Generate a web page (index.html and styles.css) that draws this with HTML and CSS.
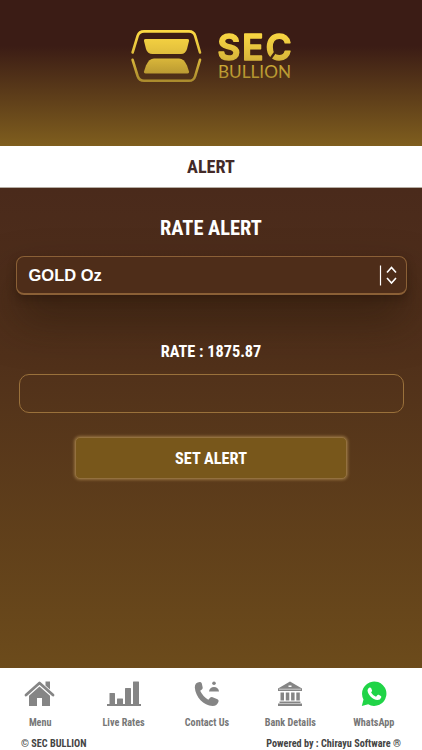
FILE: index.html
```html
<!DOCTYPE html>
<html lang="en">
  <head>
    <meta charset="UTF-8" />
    <meta name="viewport" content="width=device-width, initial-scale=1.0" />
    <title>SEC Bullion - Alert</title>
    <link rel="stylesheet" href="styles.css">
  </head>
  <body>
    <header class="header">
      <svg class="logo" width="162" height="54" viewBox="130 29 162 54">
        <defs>
          <linearGradient id="gold" gradientUnits="userSpaceOnUse" x1="0" y1="32" x2="0" y2="82">
            <stop offset="0" stop-color="#fbd843" />
            <stop offset="0.5" stop-color="#dcb93b" />
            <stop offset="1" stop-color="#a98a2d" />
          </linearGradient>
          <mask id="slit" maskUnits="userSpaceOnUse" x="210" y="25" width="90" height="60">
            <rect x="210" y="25" width="90" height="60" fill="#fff" />
            <path d="M268.500 61.500 L276 51" stroke="#000" stroke-width="2.200" />
          </mask>
        </defs>
        <g fill="none" stroke="url(#gold)" stroke-width="2.6" stroke-linecap="round">
          <path d="M132.6 52.5 L137.6 36 Q139.2 31.4 144 31.4 H189 Q193.8 31.4 195.2 36 L200 52.5" />
          <path d="M132.6 59.8 L137.6 76 Q139.2 80.8 144 80.8 H189 Q193.8 80.8 195.2 76 L200 59.8" />
        </g>
        <g fill="url(#gold)">
          <path d="M145.5 39 H187.5 Q189.5 39 189 41 L187 49 Q185.500 54 181 54 H152.500 Q147.500 54 146 49 L144 41 Q143.500 39 145.500 39Z" />
          <path d="M145.500 73.500 H187.500 Q189.500 73.500 189 71.500 L187 65.500 Q184 58.500 179 58.500 H154 Q149 58.500 146 65.500 L144 71.500 Q143.500 73.500 145.500 73.500Z" />
        </g>
        <g fill="url(#gold)" mask="url(#slit)">
          <text class="logo-sec" x="217.500 242.300 265.800" y="59.500">SEC</text>
        </g>
        <text class="logo-bullion" x="218" y="77.800" fill="url(#gold)" textLength="73" lengthAdjust="spacingAndGlyphs">BULLION</text>
      </svg>
    </header>

    <div class="page-title">ALERT</div>

    <main class="content">
      <h2 class="heading">RATE ALERT</h2>
      <div class="select">
        <span>GOLD Oz</span>
        <svg width="20" height="22" viewBox="0 0 20 22" fill="none" stroke="#fff">
          <path d="M1.500 1.500 V21.500" stroke-width="1.200" />
          <path d="M8 8.500 L12.500 3.500 L17 8.500 M8 14 L12.500 19 L17 14" stroke-width="1.600" />
        </svg>
      </div>
      <div class="rate">RATE : 1875.87</div>
      <input class="rate-input" type="text" aria-label="Rate" />
      <button class="set-button">SET ALERT</button>
    </main>

    <footer class="footer">
      <nav class="nav">
        <a class="nav-item">
          <svg width="32" height="28" viewBox="0 0 32 28" fill="#858585">
            <path d="M21.500 1.500 h4.500 v8 l-4.500 -4z" />
            <path d="M2 15 L15.500 3 L29 15" fill="none" stroke="#858585" stroke-width="2.800" stroke-linecap="round" stroke-linejoin="round" />
            <path d="M5 15.800 L15.500 6.500 L26 15.800 V26 H18 V18 H13 V26 H5Z" />
          </svg>
          <span>Menu</span>
        </a>
        <a class="nav-item">
          <svg width="34" height="28" viewBox="0 0 34 28" fill="#858585">
            <rect x="0" y="24" width="34" height="2" />
            <rect x="2.500" y="13" width="5.500" height="11.500" rx="0.500" />
            <rect x="10" y="18.500" width="6" height="6" rx="0.500" />
            <rect x="18" y="8" width="6" height="16.500" rx="0.500" />
            <rect x="26" y="1.500" width="6" height="23" rx="0.500" />
          </svg>
          <span>Live Rates</span>
        </a>
        <a class="nav-item">
          <svg width="26" height="28" viewBox="0 0 26 28" fill="#858585">
            <path d="M2 3.500 Q3.800 1.800 6.200 2 Q7.400 2.200 7.800 3.600 L8.700 7.500 Q8.900 9 7.600 9.800 L6.200 10.800 Q8.800 16.500 14.300 19.800 L16.300 17.600 Q17.200 16.800 18.600 17.200 L23.500 19.300 Q25 20 24.500 21.800 Q23 26 18.600 26 C9.500 25.500 1.500 17 0.800 7.500 Q0.800 4.800 2 3.500Z" />
            <circle cx="20" cy="3.300" r="1.800" />
            <path d="M15 11.500 Q15.600 7 20 7 Q24.400 7 25 11.500Z" />
          </svg>
          <span>Contact Us</span>
        </a>
        <a class="nav-item">
          <svg width="26" height="28" viewBox="0 0 26 28" fill="#858585">
            <path fill-rule="evenodd" d="M1 8.500 L13 1.500 L25 8.500 V11 H1Z M11.500 5.500 V7 H14.500 V5.500Z" />
            <path d="M2 9.200 H24" stroke="#fff" stroke-width="0.600" />
            <path d="M3.500 12.500 h3.500 v8 h-3.500z M8.800 12.500 h3.500 v8 h-3.500z M14.100 12.500 h3.500 v8 h-3.500z M19.300 12.500 h3.500 v8 h-3.500z M2.500 21.500 h21 v1.500 h-21z M1 23.500 h24 v2.500 h-24z" />
          </svg>
          <span>Bank Details</span>
        </a>
        <a class="nav-item">
          <svg width="26" height="28" viewBox="0 0 26 28">
            <path d="M0.800 26 L2.500 19.500 A12.200 12.200 0 1 1 7.200 24.300Z" fill="#20d447" />
            <path d="M8.500 7.500 Q9.800 7.300 10.200 8.300 L11.100 10.500 Q11.300 11.200 10.100 12.500 Q11.800 15.500 15 16.700 L16.500 15 Q17 14.500 17.700 14.800 L19.800 15.900 Q20.500 16.200 20.200 17.500 Q19.300 20 16.500 20 C11.500 19.500 7 15 6.500 10.500 Q6.600 8.500 8.500 7.500Z" fill="#fff" />
          </svg>
          <span>WhatsApp</span>
        </a>
      </nav>
      <div class="credits">
        <span>© SEC BULLION</span>
        <span>Powered by : Chirayu Software ®</span>
      </div>
    </footer>
  </body>
</html>
```
FILE: styles.css
```css
* {
  box-sizing: border-box;
}
body {
  margin: 0;
  height: 750px;
  display: flex;
  flex-direction: column;
  overflow: hidden;
  font-family: "Roboto Condensed", Roboto, sans-serif;
  font-stretch: 75%;
  font-weight: 700;
  background: #fff;
}
.header {
  height: 146px;
  padding-top: 29px;
  background: linear-gradient(#3b1c15 0, #3b1c15 46px, #7f5e1e 146px);
}
.logo {
  display: block;
  margin-left: 130px;
  overflow: visible;
}
.logo-sec {
  font-family: Inter, sans-serif;
  font-size: 35px;
  font-stretch: normal;
  font-weight: 600;
  stroke: url(#gold);
  stroke-width: 1.6;
  stroke-linejoin: round;
}
.logo-bullion {
  font-family: Lato, sans-serif;
  font-size: 18px;
  font-weight: 400;
}
.page-title {
  height: 42px;
  line-height: 41px;
  border-bottom: 1px solid #b5ada4;
  text-align: center;
  font-size: 18.2px;
  color: #432a28;
}
.content {
  height: 480px;
  display: flex;
  flex-direction: column;
  align-items: center;
  overflow: hidden;
  color: #fff;
  background: linear-gradient(#4a2a1b, #50301a 35%, #6c4b1b);
}
.heading {
  margin: 27px 0 0;
  font-size: 20.4px;
  line-height: 26px;
}
.select {
  width: 391px;
  height: 39px;
  margin-top: 15px;
  padding: 0 7px 0 12px;
  display: flex;
  align-items: center;
  justify-content: space-between;
  border: 1px solid #8b6036;
  border-bottom-width: 2px;
  border-radius: 8px;
  background: #4e2d19;
  box-shadow: 0 4px 8px rgba(30, 15, 5, 0.35), 0 24px 44px rgba(35, 22, 8, 0.5);
  font-family: "Liberation Sans", sans-serif;
  font-stretch: normal;
  font-size: 16.5px;
}
.rate {
  margin-top: 47px;
  font-size: 16.3px;
  line-height: 20px;
}
.rate-input {
  width: 385px;
  height: 39px;
  margin-top: 12px;
  padding: 0 12px;
  border: 1px solid #9a713b;
  border-radius: 10px;
  background: transparent;
  color: #fff;
}
.set-button {
  width: 272px;
  height: 42px;
  margin-top: 24px;
  padding: 0;
  border: 1px solid #93703f;
  border-radius: 5px;
  background: #78571b;
  box-shadow: 0 0 3px 1px #93703f;
  color: #fff;
  font: inherit;
  font-size: 16.3px;
}
.footer {
  height: 82px;
  background: #fff;
}
.nav {
  display: grid;
  grid-template-columns: repeat(5, 83.4px);
  margin-left: -1.5px;
  padding-top: 12px;
}
.nav-item {
  display: flex;
  flex-direction: column;
  align-items: center;
  font-size: 10.2px;
  line-height: 14px;
  color: #777;
}
.nav-item span {
  margin-top: 8px;
}
.credits {
  display: flex;
  justify-content: space-between;
  padding: 7px 21px 0;
  font-size: 10.2px;
  line-height: 14px;
  color: #444;
}
```
